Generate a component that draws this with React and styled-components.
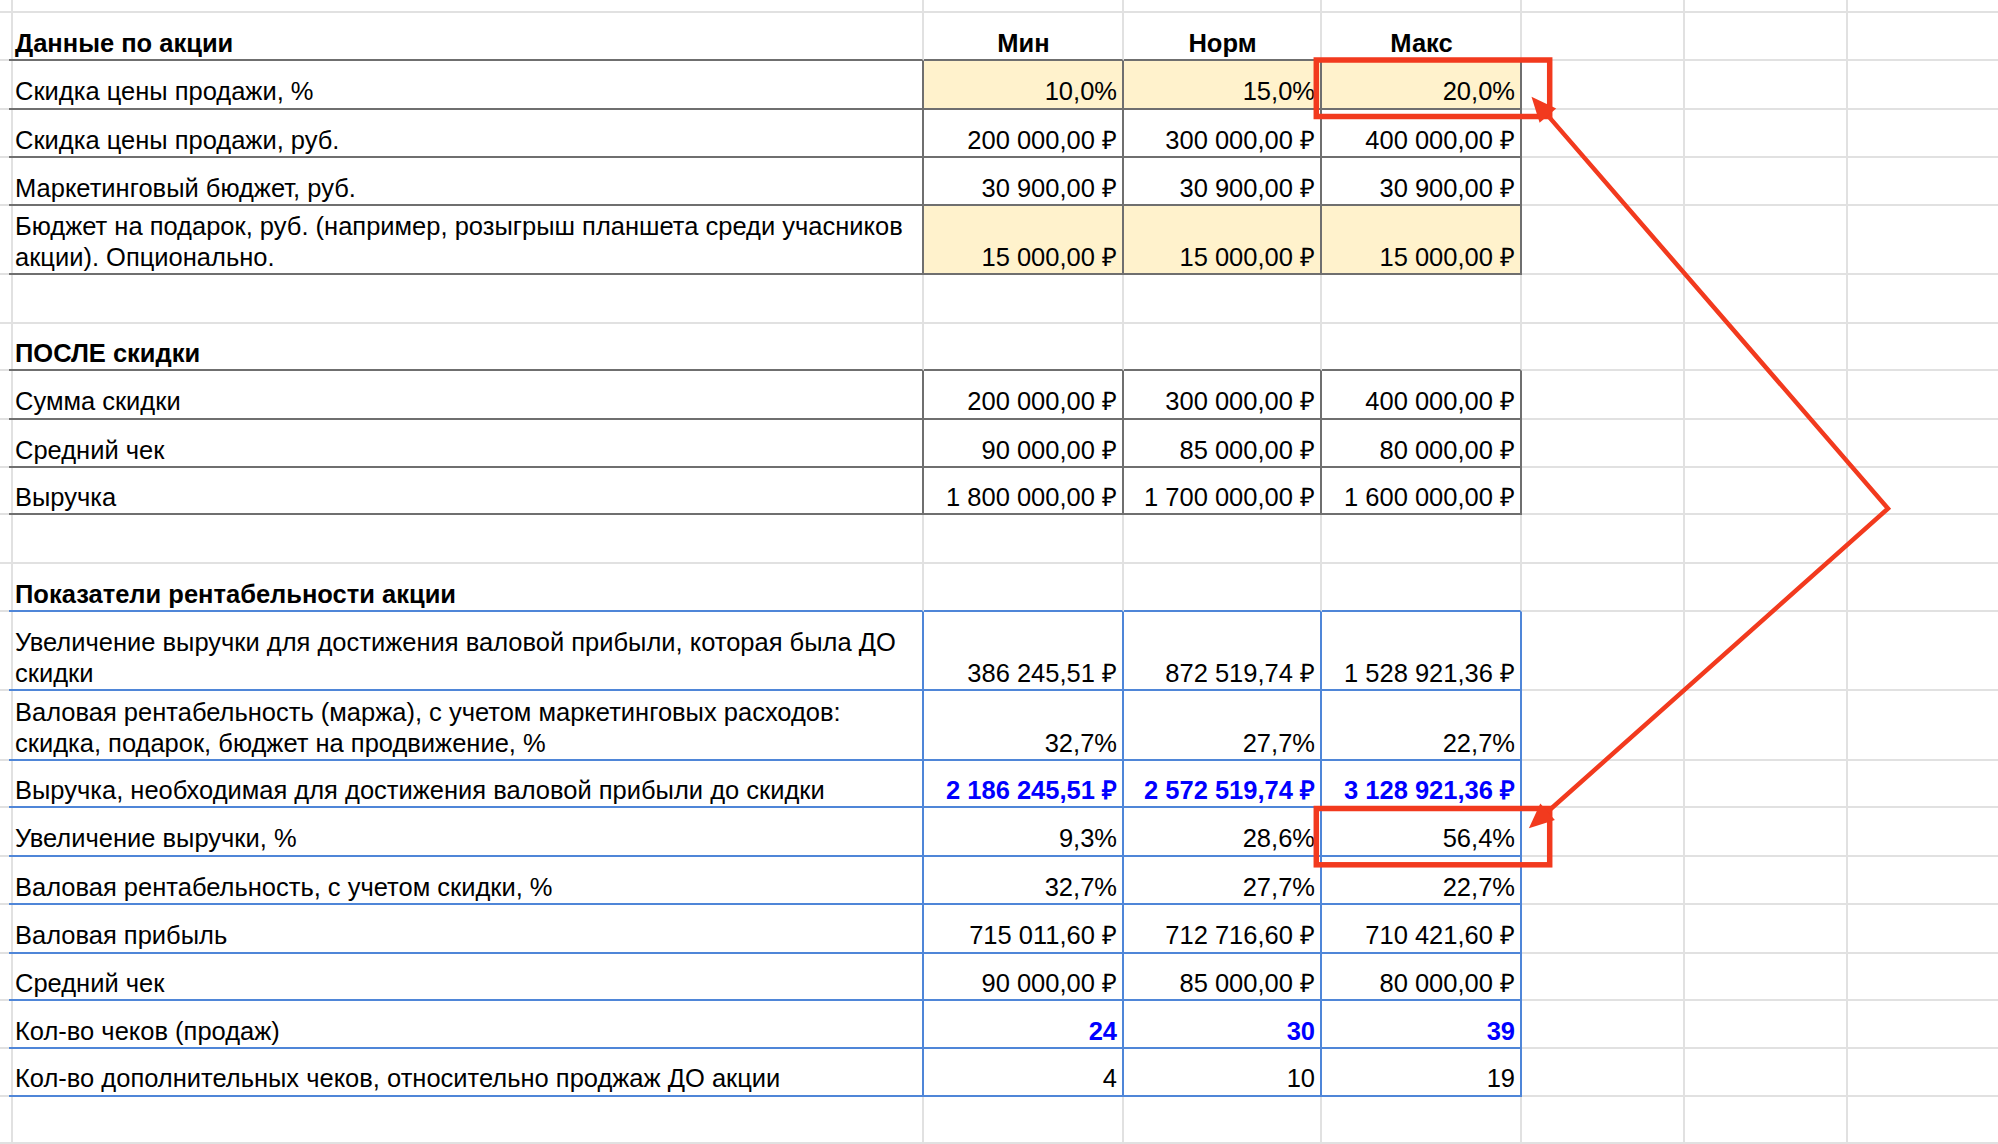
import styled, { createGlobalStyle } from 'styled-components'

const GRID = '#e1e1e1'
const DARK = '#6f6f6f'
const BLUE = '#4f86d8'
const YELLOW = '#fff2cc'
const RED = '#f23a1e'

const GlobalStyle = createGlobalStyle`
  html, body {
    margin: 0;
    padding: 0;
    background: #fff;
  }
  body {
    font-family: 'Liberation Sans', Arial, sans-serif;
  }
`

const Page = styled.div`
  position: relative;
  width: 1998px;
  height: 1144px;
  overflow: hidden;
  background: #fff;
  font-family: 'Liberation Sans', Arial, sans-serif;
  font-size: 25.5px;
  color: #000;
`

const Row = styled.div`
  display: grid;
  grid-template-columns: 9px 915px 200px 198px 200px 163px 163px 150px;
  height: ${(p) => p.$h}px;
`

const Cell = styled.div`
  box-sizing: border-box;
  display: flex;
  align-items: flex-end;
  justify-content: ${(p) =>
    p.$align === 'right' ? 'flex-end' : p.$align === 'center' ? 'center' : 'flex-start'};
  padding: 0 5px 1px 6px;
  border-right: 2px solid ${(p) => p.$right || GRID};
  border-bottom: 2px solid ${(p) => p.$bottom || GRID};
  background: ${(p) => p.$fill || 'transparent'};
  font-weight: ${(p) => (p.$bold ? 700 : 400)};
  color: ${(p) => (p.$blue ? '#0000ff' : '#000')};
  line-height: 30.5px;
  white-space: nowrap;
  min-width: 0;

  &:last-child {
    border-right: none;
  }
`

const Label = styled.span`
  display: block;
`

const Overlay = styled.svg`
  position: absolute;
  top: 0;
  left: 0;
  width: 1998px;
  height: 1144px;
  pointer-events: none;
`

const rows = [
  { h: 13, kind: 'blank' },
  { h: 48, kind: 'head', label: 'Данные по акции', values: ['Мин', 'Норм', 'Макс'], tone: DARK },
  { h: 48.5, kind: 'data', tone: DARK, fill: YELLOW, label: ['Скидка цены продажи, %'], values: ['10,0%', '15,0%', '20,0%'] },
  { h: 48.5, kind: 'data', tone: DARK, label: ['Скидка цены продажи, руб.'], values: ['200 000,00 ₽', '300 000,00 ₽', '400 000,00 ₽'] },
  { h: 48, kind: 'data', tone: DARK, label: ['Маркетинговый бюджет, руб.'], values: ['30 900,00 ₽', '30 900,00 ₽', '30 900,00 ₽'] },
  {
    h: 69,
    kind: 'data',
    tone: DARK,
    fill: YELLOW,
    label: ['Бюджет на подарок, руб. (например, розыгрыш планшета среди учасников', 'акции). Опционально.'],
    values: ['15 000,00 ₽', '15 000,00 ₽', '15 000,00 ₽'],
  },
  { h: 48.5, kind: 'blank' },
  { h: 47.5, kind: 'head', label: 'ПОСЛЕ скидки', tone: DARK },
  { h: 48.5, kind: 'data', tone: DARK, label: ['Сумма скидки'], values: ['200 000,00 ₽', '300 000,00 ₽', '400 000,00 ₽'] },
  { h: 48.5, kind: 'data', tone: DARK, label: ['Средний чек'], values: ['90 000,00 ₽', '85 000,00 ₽', '80 000,00 ₽'] },
  { h: 47, kind: 'data', tone: DARK, label: ['Выручка'], values: ['1 800 000,00 ₽', '1 700 000,00 ₽', '1 600 000,00 ₽'] },
  { h: 48.5, kind: 'blank' },
  { h: 48.5, kind: 'head', label: 'Показатели рентабельности акции', tone: BLUE },
  {
    h: 79,
    kind: 'data',
    tone: BLUE,
    label: ['Увеличение выручки для достижения валовой прибыли, которая была ДО', 'скидки'],
    values: ['386 245,51 ₽', '872 519,74 ₽', '1 528 921,36 ₽'],
  },
  {
    h: 70,
    kind: 'data',
    tone: BLUE,
    label: ['Валовая рентабельность (маржа), с учетом маркетинговых расходов:', 'скидка, подарок, бюджет на продвижение, %'],
    values: ['32,7%', '27,7%', '22,7%'],
  },
  {
    h: 47,
    kind: 'data',
    tone: BLUE,
    strong: true,
    label: ['Выручка, необходимая для достижения валовой прибыли до скидки'],
    values: ['2 186 245,51 ₽', '2 572 519,74 ₽', '3 128 921,36 ₽'],
  },
  { h: 48.5, kind: 'data', tone: BLUE, label: ['Увеличение выручки, %'], values: ['9,3%', '28,6%', '56,4%'] },
  { h: 48.5, kind: 'data', tone: BLUE, label: ['Валовая рентабельность, с учетом скидки, %'], values: ['32,7%', '27,7%', '22,7%'] },
  { h: 48.5, kind: 'data', tone: BLUE, label: ['Валовая прибыль'], values: ['715 011,60 ₽', '712 716,60 ₽', '710 421,60 ₽'] },
  { h: 47.5, kind: 'data', tone: BLUE, label: ['Средний чек'], values: ['90 000,00 ₽', '85 000,00 ₽', '80 000,00 ₽'] },
  { h: 48, kind: 'data', tone: BLUE, strong: true, label: ['Кол-во чеков (продаж)'], values: ['24', '30', '39'] },
  {
    h: 47.5,
    kind: 'data',
    tone: BLUE,
    label: ['Кол-во дополнительных чеков, относительно проджаж ДО акции'],
    values: ['4', '10', '19'],
  },
  { h: 47, kind: 'blank' },
]

function SheetRow({ row }) {
  const bottom = row.kind === 'blank' ? GRID : row.tone
  const vert = row.kind === 'data' ? row.tone : GRID
  const values = row.values || ['', '', '']

  return (
    <Row $h={row.h}>
      <Cell />
      <Cell $bottom={bottom} $right={vert} $bold={row.kind === 'head'}>
        {row.kind === 'head' && <Label>{row.label}</Label>}
        {row.kind === 'data' && (
          <Label>
            {row.label.map((line, i) => (
              <div key={i}>{line}</div>
            ))}
          </Label>
        )}
      </Cell>
      {values.map((v, i) => (
        <Cell
          key={i}
          $bottom={bottom}
          $right={vert}
          $fill={row.fill}
          $align={row.kind === 'head' ? 'center' : 'right'}
          $bold={row.kind === 'head' || row.strong}
          $blue={row.strong}
        >
          {v}
        </Cell>
      ))}
      <Cell />
      <Cell />
      <Cell />
    </Row>
  )
}

export default function App() {
  return (
    <Page>
      <GlobalStyle />
      {rows.map((row, i) => (
        <SheetRow key={i} row={row} />
      ))}
      <Overlay viewBox="0 0 1998 1144">
        <rect x="1316.3" y="60" width="233.4" height="56.5" fill="none" stroke={RED} strokeWidth="5.5" />
        <rect x="1316.3" y="808.5" width="233.4" height="56.3" fill="none" stroke={RED} strokeWidth="5.5" />
        <polyline
          points="1547.9,115.6 1888,508.5 1547.6,811.8"
          fill="none"
          stroke={RED}
          strokeWidth="4.5"
          strokeLinejoin="miter"
        />
        <polygon points="1531.5,96.7 1556.2,108.4 1539.6,122.8" fill={RED} />
        <polygon points="1528.9,828.3 1554.9,820 1540.3,803.6" fill={RED} />
      </Overlay>
    </Page>
  )
}
